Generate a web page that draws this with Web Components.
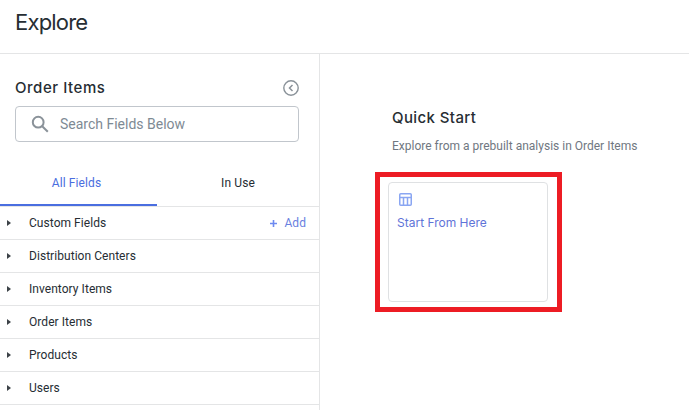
<!DOCTYPE html>
<html>
<head>
<meta charset="utf-8">
<title>Explore</title>
<style>
  html, body { margin: 0; height: 100%; overflow: hidden; background: #fff; }
  body { font-family: Roboto, sans-serif; color: #262d33; }
</style>
</head>
<body>
<explore-page>
  <side-panel slot="side" title-text="Order Items">
    <field-row label="Custom Fields" add></field-row>
    <field-row label="Distribution Centers"></field-row>
    <field-row label="Inventory Items"></field-row>
    <field-row label="Order Items"></field-row>
    <field-row label="Products"></field-row>
    <field-row label="Users"></field-row>
  </side-panel>
  <quick-start slot="main"></quick-start>
</explore-page>

<script>
class ExplorePage extends HTMLElement {
  constructor() {
    super();
    this.attachShadow({ mode: 'open' }).innerHTML = `
      <style>
        :host { display: flex; flex-direction: column; height: 410px; }
        header {
          height: 53px;
          flex: none;
          box-sizing: content-box;
          border-bottom: 1px solid #e4e5e6;
          padding-left: 15px;
          font: 400 22px/45px Inter, "Open Sans", sans-serif;
          letter-spacing: -0.8px;
          color: #262d33;
        }
        .body { display: flex; flex: 1; min-height: 0; }
      </style>
      <header>Explore</header>
      <div class="body">
        <slot name="side"></slot>
        <slot name="main"></slot>
      </div>
    `;
  }
}

class SidePanel extends HTMLElement {
  constructor() {
    super();
    this.attachShadow({ mode: 'open' }).innerHTML = `
      <style>
        :host {
          display: block;
          width: 319px;
          flex: none;
          border-right: 1px solid #e4e5e6;
        }
        .head {
          display: flex;
          align-items: center;
          justify-content: space-between;
          padding: 20px 20px 0 15px;
          height: 28px;
          margin-bottom: 4px;
        }
        h2 {
          margin: 0;
          font: 500 15px/20px Inter, "Open Sans", sans-serif;
          letter-spacing: .55px;
          color: #262d33;
        }
        svg { display: block; }
        .search {
          display: flex;
          align-items: center;
          gap: 11px;
          box-sizing: border-box;
          height: 36px;
          margin: 0 20px 0 15px;
          padding-left: 15px;
          border: 1px solid #c1c6cc;
          border-radius: 4px;
          font-size: 14px;
          color: #7e8a94;
        }
        .tabs {
          display: flex;
          margin-top: 18px;
          height: 46px;
          border-bottom: 1px solid #e4e5e6;
          font-size: 12px;
          letter-spacing: .1px;
        }
        .tab {
          flex: 1;
          display: flex;
          align-items: center;
          justify-content: center;
          padding-bottom: 1px;
          color: #262d33;
        }
        .tab.active {
          flex: none;
          box-sizing: border-box;
          width: 157px;
          padding-right: 4px;
          color: #4a6ee0;
          box-shadow: inset 0 -2px 0 #4a6ee0;
        }
      </style>
      <div class="head">
        <h2></h2>
        <svg width="16" height="16" viewBox="0 0 16 16" fill="none" stroke="#8a9299" stroke-width="1.4">
          <circle cx="8" cy="8" r="7.2"/>
          <path d="M9.500 5 6.500 8l3 3" stroke-width="1.500"/>
        </svg>
      </div>
      <div class="search">
        <svg width="18" height="18" viewBox="0 0 18 18" fill="none" stroke="#8a9299" stroke-width="2">
          <circle cx="7.2" cy="7.2" r="5.4"/>
          <path d="m11.2 11.2 5.6 5.6"/>
        </svg>
        <span>Search Fields Below</span>
      </div>
      <div class="tabs">
        <div class="tab active">All Fields</div>
        <div class="tab">In Use</div>
      </div>
      <slot></slot>
    `;
    this.shadowRoot.querySelector('h2').textContent = this.getAttribute('title-text');
  }
}

class FieldRow extends HTMLElement {
  constructor() {
    super();
    const add = this.hasAttribute('add')
      ? `<span class="add"><svg width="7" height="7" viewBox="0 0 7 7" fill="none" stroke="#6d8af0" stroke-width="1.6"><path d="M3.500 0v7M0 3.500h7"/></svg>Add</span>`
      : '';
    this.attachShadow({ mode: 'open' }).innerHTML = `
      <style>
        :host {
          display: flex;
          align-items: center;
          box-sizing: border-box;
          height: 33px;
          padding: 0 13px 0 7px;
          border-bottom: 1px solid #e4e5e6;
          font-size: 12px;
          letter-spacing: .05px;
          color: #262d33;
        }
        .arrow {
          width: 0;
          height: 0;
          margin-right: 18px;
          border-left: 4px solid #3c4247;
          border-top: 3.5px solid transparent;
          border-bottom: 3.5px solid transparent;
        }
        .label { flex: 1; }
        .add { display: flex; align-items: center; gap: 7px; color: #6a7fe0; font-size: 12px; }
      </style>
      <span class="arrow"></span>
      <span class="label"></span>
      ${add}
    `;
    this.shadowRoot.querySelector('.label').textContent = this.getAttribute('label');
  }
}

class QuickStart extends HTMLElement {
  constructor() {
    super();
    this.attachShadow({ mode: 'open' }).innerHTML = `
      <style>
        :host { display: block; flex: 1; padding: 54px 0 0 55px; }
        h3 {
          margin: 0;
          padding-left: 17px;
          font: 500 15px/20px Inter, "Open Sans", sans-serif;
          letter-spacing: .4px;
          color: #262d33;
        }
        p {
          margin: 0;
          padding: 10px 0 0 17px;
          font-size: 12px;
          line-height: 16px;
          color: #707781;
        }
        .mark {
          box-sizing: border-box;
          width: 187px;
          height: 140px;
          margin-top: 18px;
          padding: 5px 9px 5px 8px;
          border: 5px solid #ed1c24;
        }
        .card {
          box-sizing: border-box;
          height: 100%;
          padding: 10px 8px;
          border: 1px solid #dfe1e3;
          border-radius: 4px;
        }
        svg { display: block; margin-left: 2px; }
        .name {
          margin-top: 9px;
          font: 400 12px/16px Inter, "Open Sans", sans-serif;
          color: #5f74d8;
        }
      </style>
      <h3>Quick Start</h3>
      <p>Explore from a prebuilt analysis in Order Items</p>
      <div class="mark">
        <div class="card">
          <svg width="13" height="13" viewBox="0 0 13 13" fill="none" stroke="#8aa6f2" stroke-width="1.500">
            <rect x=".75" y=".75" width="11.500" height="11.500" rx="1"/>
            <path d="M.75 4.500h11.500M4.500 4.500v8M8.500 4.500v8"/>
          </svg>
          <div class="name">Start From Here</div>
        </div>
      </div>
    `;
  }
}

customElements.define('explore-page', ExplorePage);
customElements.define('side-panel', SidePanel);
customElements.define('field-row', FieldRow);
customElements.define('quick-start', QuickStart);
</script>
</body>
</html>
